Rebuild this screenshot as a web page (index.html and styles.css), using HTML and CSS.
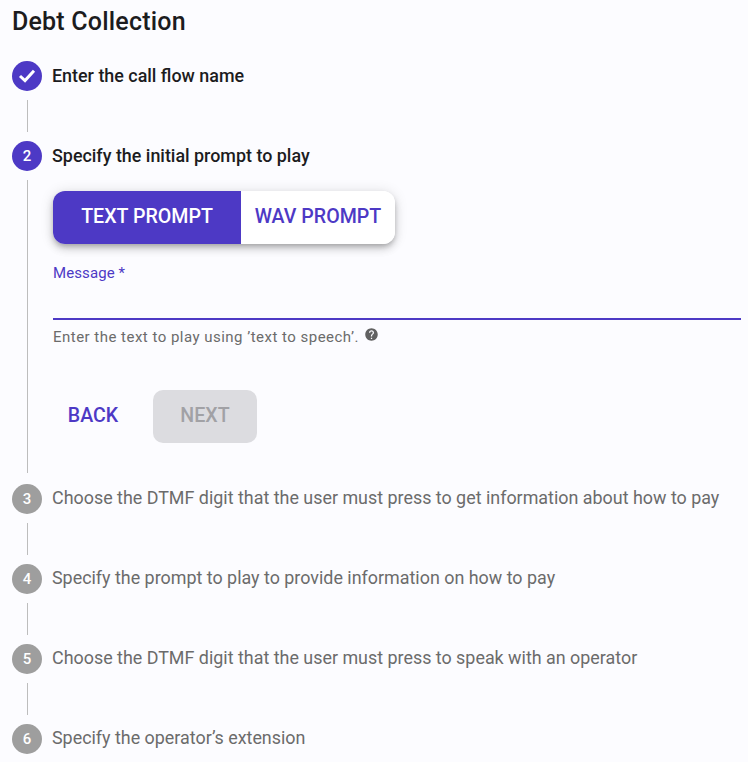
FILE: index.html
```html
<!DOCTYPE html>
<html lang="en">
<head>
    <meta charset="UTF-8">
    <title>Debt Collection</title>
    <link rel="stylesheet" href="styles.css">
</head>
<body>
    <h1 class="title">Debt Collection</h1>
    <div class="stepper">
        <div class="step-header">
            <span class="step-icon active">
                <svg width="20" height="20" viewBox="0 0 20 20"><path d="M3 10 8 14.6 17 4.8" fill="none" stroke="#fff" stroke-width="3"/></svg>
            </span>
            <span class="step-label current">Enter the call flow name</span>
        </div>
        <div class="connector"></div>

        <div class="step-header">
            <span class="step-icon active">2</span>
            <span class="step-label current">Specify the initial prompt to play</span>
        </div>
        <div class="step-content">
            <div class="toggle">
                <button class="toggle-btn selected">TEXT PROMPT</button>
                <button class="toggle-btn">WAV PROMPT</button>
            </div>
            <div class="field">
                <label class="field-label" for="message">Message *</label>
                <input class="field-input" id="message" type="text">
            </div>
            <div class="helper">
                <span>Enter the text to play using ’text to speech’.</span>
                <svg class="help-icon" width="15" height="15" viewBox="0 0 24 24"><path fill="#616161" d="M12 2C6.48 2 2 6.48 2 12s4.48 10 10 10 10-4.48 10-10S17.52 2 12 2zm1 17h-2v-2h2v2zm2.07-7.75-.9.92C13.45 12.9 13 13.5 13 15h-2v-.5c0-1.1.45-2.1 1.17-2.83l1.24-1.26c.37-.36.59-.86.59-1.41 0-1.1-.9-2-2-2s-2 .9-2 2H8c0-2.21 1.79-4 4-4s4 1.79 4 4c0 .88-.36 1.68-.93 2.25z"/></svg>
            </div>
            <div class="actions">
                <button class="btn-back">BACK</button>
                <button class="btn-next" disabled>NEXT</button>
            </div>
        </div>

        <div class="step-header">
            <span class="step-icon">3</span>
            <span class="step-label">Choose the DTMF digit that the user must press to get information about how to pay</span>
        </div>
        <div class="connector"></div>

        <div class="step-header">
            <span class="step-icon">4</span>
            <span class="step-label">Specify the prompt to play to provide information on how to pay</span>
        </div>
        <div class="connector"></div>

        <div class="step-header">
            <span class="step-icon">5</span>
            <span class="step-label">Choose the DTMF digit that the user must press to speak with an operator</span>
        </div>
        <div class="connector"></div>

        <div class="step-header">
            <span class="step-icon">6</span>
            <span class="step-label">Specify the operator’s extension</span>
        </div>
    </div>
</body>
</html>
```

FILE: styles.css
```css
html, body {
    height: 762px;
    overflow: hidden;
}

body {
    margin: 0;
    background-color: #fcfcff;
    font-family: Roboto, sans-serif;
    color: #1c1c1e;
}

.title {
    margin: 0;
    padding: 7px 0 0 12px;
    height: 61px;
    box-sizing: border-box;
    font-size: 25px;
    line-height: 30px;
    font-weight: 500;
    letter-spacing: 0.2px;
}

.stepper {
    padding-left: 12px;
}

.step-header {
    display: flex;
    align-items: center;
    gap: 10px;
    height: 30px;
}

.step-icon {
    flex: none;
    width: 30px;
    height: 30px;
    border-radius: 50%;
    background-color: #9e9e9e;
    color: #fff;
    display: flex;
    align-items: center;
    justify-content: center;
    font-size: 15px;
    font-weight: 500;
}

.step-icon.active {
    background-color: #4d39c5;
}

.step-label {
    font-size: 17.9px;
    line-height: 24px;
    padding-bottom: 2px;
    color: #6b6b6b;
}

.step-label.current {
    padding-bottom: 0;
    color: #1c1c1e;
    font-weight: 500;
}

.connector {
    margin: 9px 0 9px 15px;
    height: 32px;
    border-left: 1px solid #bdbdbd;
}

.step-content {
    margin: 9px 0 11px 15px;
    height: 293px;
    box-sizing: border-box;
    border-left: 1px solid #bdbdbd;
    padding: 11px 0 0 25px;
}

.toggle {
    display: inline-flex;
    height: 53px;
    border-radius: 12px;
    overflow: hidden;
    box-shadow: 0 3px 5px -1px rgba(0, 0, 0, 0.2), 0 5px 8px rgba(0, 0, 0, 0.14), 0 1px 14px rgba(0, 0, 0, 0.12);
    vertical-align: top;
}

.toggle-btn {
    width: 154px;
    border: none;
    background-color: #fff;
    color: #4d39c5;
    font-family: inherit;
    font-size: 19.6px;
    font-weight: 500;
    padding: 0 0 2px;
}

.toggle-btn.selected {
    width: 188px;
    background-color: #4d39c5;
    color: #fff;
}

.field {
    margin-top: 20px;
    height: 56px;
    width: 688px;
    display: flex;
    flex-direction: column;
}

.field-label {
    font-size: 15px;
    line-height: 18px;
    letter-spacing: 0.1px;
    color: #4d39c5;
}

.field-input {
    flex: 1;
    border: none;
    border-bottom: 2px solid #4d39c5;
    background: transparent;
    outline: none;
}

.helper {
    display: flex;
    align-items: flex-start;
    gap: 5px;
    margin-top: 8px;
    font-size: 15px;
    line-height: 18px;
    letter-spacing: 0.48px;
    color: #6b6b6b;
}

.help-icon {
    flex: none;
    margin-top: -1px;
}

.actions {
    display: flex;
    gap: 20px;
    margin-top: 44px;
}

.actions button {
    height: 53px;
    border: none;
    border-radius: 10px;
    font-family: inherit;
    font-size: 19.6px;
    font-weight: 500;
    padding: 0 0 2px;
}

.btn-back {
    width: 80px;
    background: transparent;
    color: #4d39c5;
}

.btn-next {
    width: 104px;
    background-color: #dcdce0;
    color: #a1a1a5;
}
```
